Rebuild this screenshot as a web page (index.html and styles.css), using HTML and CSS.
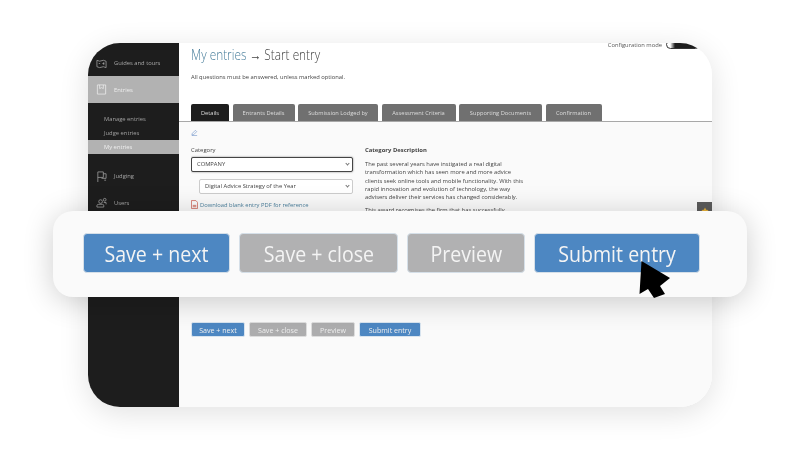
FILE: index.html
```html
<!DOCTYPE html>
<html lang="en">
<head>
    <meta charset="UTF-8">
    <meta name="viewport" content="width=device-width, initial-scale=1.0">
    <title>Start entry</title>
    <link rel="stylesheet" href="styles.css">
</head>
<body>

    <div class="stage">
        <div class="window">
            <div class="sidebar">
                <div class="nav-item nav-first">
                    <svg class="nav-icon" viewBox="0 0 12 12"><path d="M1 2.500l3 1 4-1 3 1v7l-3-1-4 1-3-1z M3 6h1.500 M7 6h2 M8.500 4.500v3"/></svg>
                    <span>Guides and tours</span>
                </div>
                <div class="nav-item nav-active">
                    <svg class="nav-icon" viewBox="0 0 12 12"><path d="M1.500 1h9v10h-9z M4 1v4l2-1 2 1V1"/></svg>
                    <span>Entries</span>
                </div>
                <div class="subnav">
                    <a href="#">Manage entries</a>
                    <a href="#">Judge entries</a>
                    <a href="#" class="sub-active">My entries</a>
                </div>
                <div class="nav-item nav-judging">
                    <svg class="nav-icon" viewBox="0 0 12 12"><path d="M2 12V1h6v6H2 M8 3h3v5H6 M9 10h2"/></svg>
                    <span>Judging</span>
                </div>
                <div class="nav-item nav-users">
                    <svg class="nav-icon" viewBox="0 0 12 12"><circle cx="5" cy="5" r="2"/><circle cx="9.500" cy="3" r="1.500"/><path d="M1 11V9.500Q1 8 3 8h4q1.500 0 1.500 1.500V11z M8.500 6H11v2"/></svg>
                    <span>Users</span>
                </div>
            </div>

            <div class="main">
                <div class="config">
                    <span>Configuration mode</span>
                    <span class="toggle"></span>
                </div>
                <h1 class="title"><span class="title-text"><span class="crumb">My entries</span> &#8594; Start entry</span></h1>
                <p class="note">All questions must be answered, unless marked optional.</p>

                <div class="tabs">
                    <a href="#" class="tab tab-details">Details</a>
                    <a href="#" class="tab tab-entrants">Entrants Details</a>
                    <a href="#" class="tab tab-lodged">Submission Lodged by</a>
                    <a href="#" class="tab tab-criteria">Assessment Criteria</a>
                    <a href="#" class="tab tab-docs">Supporting Documents</a>
                    <a href="#" class="tab tab-confirm">Confirmation</a>
                </div>

                <div class="panel">
                    <svg class="pencil" viewBox="0 0 8 8"><path d="M1 7l.5-2L5 1.500 6.500 3 3 6.500z M1 7.500h6"/></svg>
                    <div class="form-grid">
                        <div class="form-col">
                            <label class="field-label">Category</label>
                            <div class="select select-focus">COMPANY<span class="chev"></span></div>
                            <div class="select select-sub">Digital Advice Strategy of the Year<span class="chev"></span></div>
                            <a href="#" class="pdf-link">
                                <svg class="pdf-icon" viewBox="0 0 8 10"><path d="M.5.500h5l2 2v7h-7z"/><path d="M2 7.500h4M2 6h4"/></svg>
                                Download blank entry PDF for reference
                            </a>
                        </div>
                        <div class="desc">
                            <h3>Category Description</h3>
                            <p>The past several years have instigated a real digital transformation which has seen more and more advice clients seek online tools and mobile functionality. With this rapid innovation and evolution of technology, the way advisers deliver their services has changed considerably.</p>
                            <p>This award recognises the firm that has successfully</p>
                        </div>
                    </div>
                    <div class="actions">
                        <button class="btn btn-blue small-next">Save + next</button>
                        <button class="btn btn-grey small-close">Save + close</button>
                        <button class="btn btn-grey small-preview">Preview</button>
                        <button class="btn btn-blue small-submit">Submit entry</button>
                    </div>
                </div>
                <div class="help-tab"><svg viewBox="0 0 10 10"><path d="M5 .5l1.400 3 3.100.4-2.300 2.100.6 3.100L5 7.600 2.200 9.100l.6-3.100L.5 3.900l3.100-.4z"/></svg></div>
            </div>
        </div>

        <div class="action-bar">
            <button class="big-btn big-next"><span>Save + next</span></button>
            <button class="big-btn big-close"><span>Save + close</span></button>
            <button class="big-btn big-preview"><span>Preview</span></button>
            <button class="big-btn big-submit"><span>Submit entry</span></button>
        </div>

        <svg class="cursor" viewBox="0 0 34 40"><polygon points="2.500,1 31,18 21,26 26,34 15,38 9,29 .5,34"/></svg>
    </div>

</body>
</html>
```

FILE: styles.css
```css
* {
    box-sizing: border-box;
}
html, body {
    margin: 0;
    padding: 0;
    overflow: hidden;
    background-color: #fff;
}
body {
    font-family: "Open Sans", sans-serif;
}
.stage {
    position: relative;
    width: 800px;
    height: 469px;
    padding: 43px 88px 62px;
}
.window {
    display: flex;
    height: 364px;
    border-radius: 32px;
    overflow: hidden;
    background-color: #fbfbfb;
    box-shadow: 0 6px 30px rgba(0, 0, 0, 0.12);
}
.sidebar {
    width: 91px;
    flex-shrink: 0;
    background-color: #1d1d1d;
    color: #a8a8a8;
    font-size: 5.8px;
    filter: blur(0.3px);
}
.nav-item {
    display: flex;
    align-items: center;
    gap: 7px;
    padding-left: 8px;
    height: 27px;
}
.nav-first {
    height: 33px;
    padding-top: 8px;
    border-bottom: 1px solid #1d1d1d;
}
.nav-active {
    background-color: #b2b2b2;
    color: #eee;
}
.nav-judging {
    margin-top: 8px;
    height: 28px;
}
.nav-users {
    height: 25px;
}
.nav-icon {
    width: 11px;
    height: 11px;
    fill: none;
    stroke: currentColor;
    stroke-width: 0.8;
    flex-shrink: 0;
}
.subnav {
    display: flex;
    flex-direction: column;
    padding-top: 9px;
}
.subnav a {
    height: 14px;
    line-height: 14px;
    padding-left: 16px;
    color: #a0a0a0;
    text-decoration: none;
}
.subnav .sub-active {
    background-color: #b2b2b2;
    color: #eee;
}
.main {
    position: relative;
    flex: 1;
    min-width: 0;
    display: flex;
    flex-direction: column;
    background-color: #fff;
}
.main > * {
    filter: blur(0.3px);
}
.config {
    position: absolute;
    top: -3px;
    right: 12px;
    display: flex;
    align-items: center;
    gap: 4px;
    font-size: 5.8px;
    color: #555;
}
.toggle {
    width: 34px;
    height: 9px;
    border-radius: 5px;
    border: 1px solid #333;
    background: linear-gradient(to right, #fff 10%, #1d1d1d 25%);
}
.title {
    margin: 0;
    padding: 3px 0 0 12px;
    height: 26px;
    font-weight: 300;
    font-size: 14.5px;
    line-height: 18px;
    color: #444;
    white-space: nowrap;
}
.title-text {
    display: inline-block;
    transform: scaleX(0.815);
    transform-origin: left center;
}
.crumb {
    color: #4a7f9c;
}
.note {
    margin: 0;
    padding: 3px 0 0 12px;
    height: 35px;
    font-size: 5.8px;
    line-height: 10px;
    color: #444;
}
.tabs {
    display: flex;
    gap: 3.500px;
    padding-left: 12px;
    height: 18px;
    border-bottom: 1px solid #a8a8a8;
}
.tab {
    display: flex;
    align-items: center;
    justify-content: center;
    height: 17px;
    border-radius: 2px 2px 0 0;
    background-color: #707070;
    color: #ddd;
    font-size: 5.7px;
    text-decoration: none;
    white-space: nowrap;
}
.tab-details {
    width: 38px;
    background-color: #1d1d1d;
}
.tab-entrants {
    width: 62px;
}
.tab-lodged {
    width: 80px;
}
.tab-criteria {
    width: 74px;
}
.tab-docs {
    width: 83px;
}
.tab-confirm {
    width: 56px;
}
.panel {
    flex: 1;
    background-color: #fafafa;
    padding: 7px 12px 0;
}
.pencil {
    display: block;
    width: 7px;
    height: 7px;
    fill: none;
    stroke: #6f93c8;
    stroke-width: 0.7;
}
.form-grid {
    display: flex;
    gap: 12px;
    height: 167px;
    margin-top: 9px;
    overflow: hidden;
}
.form-col {
    width: 162px;
    flex-shrink: 0;
}
.field-label {
    display: block;
    height: 12px;
    font-size: 5.9px;
    line-height: 10px;
    color: #444;
}
.select {
    position: relative;
    height: 15px;
    padding-left: 5px;
    border: 1px solid #ccc;
    border-radius: 2px;
    background-color: #fff;
    font-size: 5.8px;
    line-height: 13px;
    color: #444;
}
.select-focus {
    border-color: #444;
    box-shadow: 0 0 2px rgba(0, 0, 0, 0.5);
}
.select-sub {
    margin: 7px 0 0 8px;
}
.chev {
    position: absolute;
    top: 4px;
    right: 3px;
    width: 3px;
    height: 3px;
    border-right: 0.7px solid #777;
    border-bottom: 0.7px solid #777;
    transform: rotate(45deg);
}
.pdf-link {
    display: flex;
    align-items: center;
    gap: 2px;
    margin-top: 6px;
    font-size: 5.8px;
    color: #4a7f9c;
    text-decoration: none;
    white-space: nowrap;
}
.pdf-icon {
    width: 7px;
    height: 9px;
    fill: none;
    stroke: #c9503f;
    stroke-width: 0.8;
    flex-shrink: 0;
}
.desc {
    width: 161px;
    font-size: 5.8px;
    line-height: 8.300px;
    color: #444;
}
.desc h3 {
    margin: 0 0 5px;
    font-size: 5.9px;
    line-height: 10px;
    font-weight: 700;
}
.desc p {
    margin: 0 0 5px;
}
.actions {
    display: flex;
    gap: 4px;
    margin-top: 10px;
}
.btn {
    height: 15px;
    padding: 0;
    border: 1px solid #d8e4ef;
    border-radius: 2px;
    font-family: inherit;
    font-size: 7.1px;
    color: #eee;
}
.btn-blue {
    background-color: #4d87c2;
}
.btn-grey {
    background-color: #adadae;
    border-color: #ddd;
}
.small-next {
    width: 54px;
}
.small-close {
    width: 58px;
}
.small-preview {
    width: 44px;
}
.small-submit {
    width: 62px;
}
.help-tab {
    position: absolute;
    top: 159px;
    right: 0;
    display: flex;
    justify-content: center;
    padding-top: 5px;
    width: 15px;
    height: 16px;
    background-color: #5b5b5b;
}
.help-tab svg {
    width: 8px;
    height: 8px;
    fill: #e8b23a;
}
.action-bar {
    position: absolute;
    left: 53px;
    top: 211px;
    display: flex;
    align-items: center;
    gap: 9px;
    width: 694px;
    height: 86px;
    padding: 0 0 2px 30px;
    border-radius: 20px;
    background-color: #fafafa;
    box-shadow: 0 4px 30px rgba(0, 0, 0, 0.2);
}
.big-btn {
    height: 40px;
    padding: 0;
    border: 1px solid #d5dfe8;
    border-radius: 4px;
    font-family: inherit;
    font-size: 22px;
    color: #f4f4f4;
    white-space: nowrap;
}
.big-btn span {
    display: inline-block;
    transform: scaleX(0.89);
}
.big-next {
    width: 147px;
    background-color: #4d87c2;
}
.big-close {
    width: 159px;
    background-color: #b1b1b2;
}
.big-preview {
    width: 118px;
    background-color: #b1b1b2;
}
.big-submit {
    width: 166px;
    background-color: #4d87c2;
}
.cursor {
    position: absolute;
    left: 639px;
    top: 260px;
    width: 34px;
    height: 40px;
    fill: #000;
}
```
